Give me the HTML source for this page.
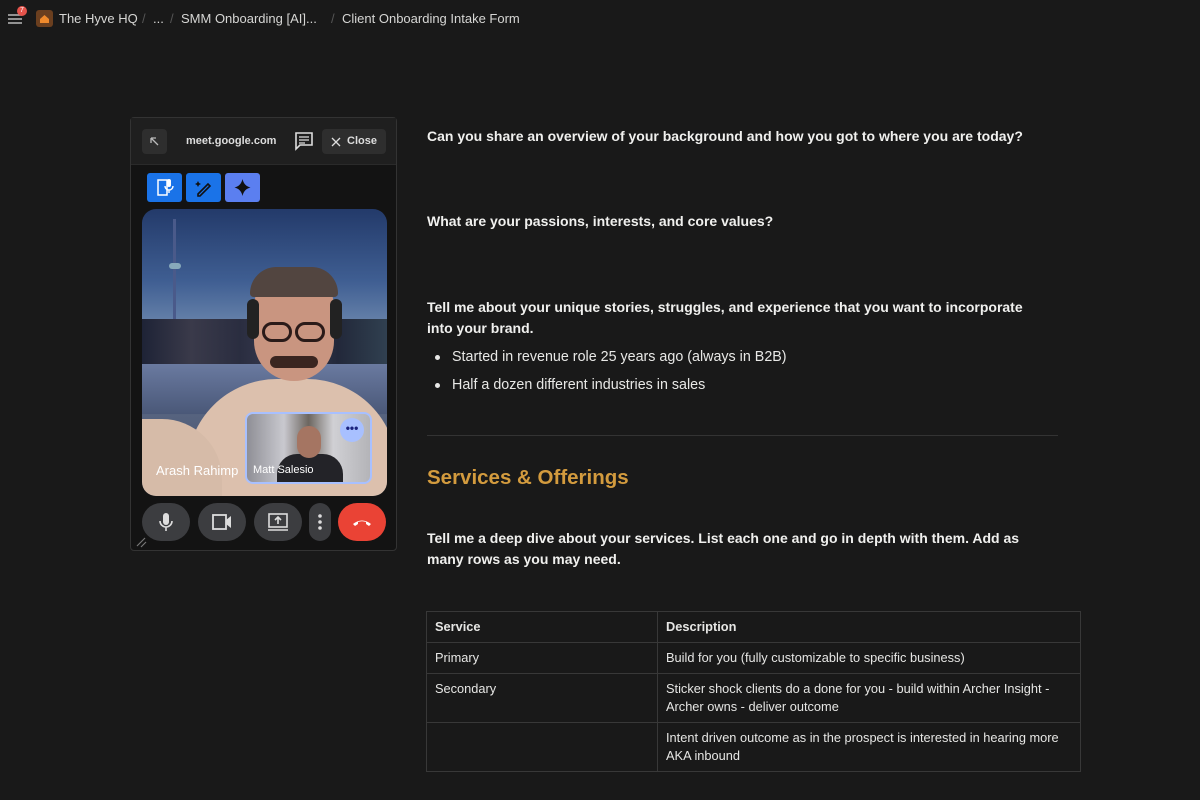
<!DOCTYPE html>
<html><head><meta charset="utf-8">
<style>
*{box-sizing:border-box;margin:0;padding:0}
body{width:1200px;height:800px;overflow:hidden;background:#191919;font-family:"Liberation Sans",sans-serif;color:#e8e8e6;position:relative}
.abs{position:absolute}
.crumb{top:11px;font-size:13px;color:#d6d6d4;white-space:nowrap}
.sep{color:#555}
.q{left:427px;font-size:14px;font-weight:bold;color:#f0f0ee;line-height:21px}
.li{left:452px;font-size:14.3px;color:#e8e8e6}
.li:before{content:"";position:absolute;left:-17px;top:6px;width:5px;height:5px;border-radius:50%;background:#e8e8e6}
table{position:absolute;left:426px;top:611px;width:655px;border-collapse:collapse;font-size:12.8px;color:#e6e6e4}
td{border:1px solid #383838;padding:6px 8px 6px 8px;vertical-align:top;line-height:18px}
.ctl{position:absolute;top:503px;height:38px;border-radius:19px;background:#3c3d40}
</style></head><body>
<svg class="abs" style="left:7px;top:12px" width="16" height="14"><path d="M1 3h14M1 7h14M1 11h14" stroke="#bbb" stroke-width="1.6"/></svg>
<div class="abs" style="left:17px;top:6px;width:10px;height:10px;border-radius:50%;background:#e5534b;font-size:7px;color:#fff;text-align:center;line-height:10px">7</div>
<div class="abs" style="left:36px;top:10px;width:17px;height:17px;border-radius:3px;background:#6b3f1f"><svg width="17" height="17"><path d="M4 9l4.5-4 4.5 4v4H4z" fill="#f08a2c"/></svg></div>
<div class="abs crumb" style="left:59px">The Hyve HQ</div>
<div class="abs crumb sep" style="left:142px">/</div>
<div class="abs crumb" style="left:153px">...</div>
<div class="abs crumb sep" style="left:170px">/</div>
<div class="abs crumb" style="left:181px">SMM Onboarding [AI]...</div>
<div class="abs crumb sep" style="left:331px">/</div>
<div class="abs crumb" style="left:342px">Client Onboarding Intake Form</div>

<div class="abs q" style="top:126px">Can you share an overview of your background and how you got to where you are today?</div>
<div class="abs q" style="top:211px">What are your passions, interests, and core values?</div>
<div class="abs q" style="top:297px;width:620px">Tell me about your unique stories, struggles, and experience that you want to incorporate into your brand.</div>
<div class="abs li" style="top:349px">Started in revenue role 25 years ago (always in B2B)</div>
<div class="abs li" style="top:377px">Half a dozen different industries in sales</div>
<div class="abs" style="left:427px;top:435px;width:631px;height:1px;background:#333"></div>
<div class="abs" style="left:427px;top:466px;font-size:20.5px;font-weight:bold;color:#d39b3e">Services &amp; Offerings</div>
<div class="abs q" style="top:528px;width:620px">Tell me a deep dive about your services. List each one and go in depth with them. Add as many rows as you may need.</div>
<table>
<tr><td style="width:231px;font-weight:bold">Service</td><td style="font-weight:bold">Description</td></tr>
<tr><td>Primary</td><td>Build for you (fully customizable to specific business)</td></tr>
<tr><td>Secondary</td><td>Sticker shock clients do a done for you - build within Archer Insight - Archer owns - deliver outcome</td></tr>
<tr><td></td><td>Intent driven outcome as in the prospect is interested in hearing more AKA inbound</td></tr>
</table>

<div class="abs" style="left:130px;top:117px;width:267px;height:434px;background:#131313;border:1px solid #333;border-radius:4px">
  <div class="abs" style="left:0;top:0;width:265px;height:47px;background:#1f1f1f;border-bottom:1px solid #2a2a2a"></div>
  <div class="abs" style="left:11px;top:11px;width:25px;height:25px;background:#2e2e2e;border-radius:4px"><svg width="25" height="25"><path d="M9 9l7 7M9 9h5M9 9v5" stroke="#bbb" stroke-width="1.3" fill="none"/></svg></div>
  <div class="abs" style="left:55px;top:17px;font-size:11px;font-weight:bold;color:#ddd">meet.google.com</div>
  <svg class="abs" style="left:163px;top:13px" width="20" height="20"><path d="M2 2h16v12H6l-4 4z" stroke="#ddd" stroke-width="1.6" fill="none"/><path d="M5 6h10M5 9h10M5 12h6" stroke="#ddd" stroke-width="1.3"/></svg>
  <div class="abs" style="left:191px;top:11px;width:64px;height:25px;background:#2e2e2e;border-radius:4px;font-size:11px;font-weight:bold;color:#ddd;line-height:25px;padding-left:25px">Close</div>
  <svg class="abs" style="left:200px;top:19px" width="10" height="10"><path d="M1 1l8 8M9 1l-8 8" stroke="#ddd" stroke-width="1.3"/></svg>
  <div class="abs" style="left:16px;top:55px;width:35px;height:29px;background:#1a73e8;border-radius:3px"><svg width="35" height="29"><path d="M11 7h9v15h-9z" stroke="#fff" stroke-width="1.5" fill="none"/><rect x="20" y="6" width="4" height="8" rx="2" fill="#fff"/><path d="M18 13a4 4 0 0 0 8 0M22 17v3" stroke="#fff" stroke-width="1.4" fill="none"/></svg></div>
  <div class="abs" style="left:55px;top:55px;width:35px;height:29px;background:#1a73e8;border-radius:3px"><svg width="35" height="29"><path d="M12 21l10-10 2 2-10 10h-2z" stroke="#111" stroke-width="1.6" fill="none"/><path d="M12 8l1 2 2 1-2 1-1 2-1-2-2-1 2-1z" fill="#111"/></svg></div>
  <div class="abs" style="left:94px;top:55px;width:35px;height:29px;background:#5b7ff0;border-radius:3px"><svg width="35" height="29"><path d="M17.5 6q1.5 7 8 8.5-6.5 1.5-8 8.5-1.5-7-8-8.5 6.5-1.5 8-8.5z" fill="#111"/></svg></div>
  <div class="abs" style="left:11px;top:91px;width:245px;height:287px;border-radius:14px;overflow:hidden;background:linear-gradient(180deg,#233a6a 0%,#3f5e92 25%,#6c87ad 42%,#4d5a78 52%,#3b4868 62%,#56637f 72%,#3e4a63 100%)">
    <div class="abs" style="left:31px;top:10px;width:3px;height:140px;background:#4a5a8a"></div>
    <div class="abs" style="left:27px;top:54px;width:12px;height:6px;border-radius:3px;background:#8ab"></div>
    <div class="abs" style="left:0;top:110px;width:245px;height:45px;background:linear-gradient(90deg,#1e2336 0%,#3a3a4a 20%,#2a2d40 40%,#3c3f55 60%,#22283a 80%,#304050 100%)"></div>
    <div class="abs" style="left:0;top:155px;width:245px;height:50px;background:linear-gradient(180deg,#6a7aa0,#4a5878)"></div>
    <div class="abs" style="left:45px;top:170px;width:210px;height:130px;border-radius:90px 90px 0 0;background:#dcc0ad"></div>
    <div class="abs" style="left:0;top:210px;width:80px;height:80px;border-radius:0 60px 0 0;background:#d6bba8"></div>
    <div class="abs" style="left:112px;top:62px;width:80px;height:110px;border-radius:40px 40px 45px 45px;background:#c99580"></div>
    <div class="abs" style="left:108px;top:58px;width:88px;height:30px;border-radius:44px 44px 6px 6px;background:#524540"></div>
    <div class="abs" style="left:105px;top:90px;width:12px;height:40px;border-radius:6px;background:#222"></div>
    <div class="abs" style="left:188px;top:90px;width:12px;height:40px;border-radius:6px;background:#222"></div>
    <div class="abs" style="left:120px;top:113px;width:30px;height:20px;border-radius:10px;border:3px solid #2a1a18"></div>
    <div class="abs" style="left:153px;top:113px;width:30px;height:20px;border-radius:10px;border:3px solid #2a1a18"></div>
    <div class="abs" style="left:128px;top:147px;width:48px;height:12px;border-radius:6px;background:#3a2520"></div>
    <div class="abs" style="left:14px;top:254px;font-size:13px;color:#fff">Arash Rahimp</div>
    <div class="abs" style="left:103px;top:203px;width:127px;height:72px;border-radius:8px;border:2px solid #a8c0ff;overflow:hidden;background:linear-gradient(90deg,#8f8f96 0%,#c9c9cf 30%,#6c6660 50%,#d0d0d4 70%,#b4b4b8 100%)">
      <div class="abs" style="left:30px;top:40px;width:66px;height:35px;border-radius:20px 20px 0 0;background:#232328"></div>
      <div class="abs" style="left:50px;top:12px;width:24px;height:32px;border-radius:12px;background:#a57562"></div>
      <div class="abs" style="left:93px;top:4px;width:24px;height:24px;border-radius:50%;background:#a8c0ff;font-size:12px;font-weight:bold;color:#1a237e;text-align:center;line-height:20px">•••</div>
      <div class="abs" style="left:6px;top:50px;font-size:11px;color:#fff">Matt Salesio</div>
    </div>
  </div>
  <div class="ctl" style="left:11px;top:385px;width:48px"><svg width="48" height="38"><rect x="21" y="10" width="6" height="12" rx="3" fill="#ddd"/><path d="M18 18a6 6 0 0 0 12 0M24 24v4" stroke="#ddd" stroke-width="1.6" fill="none"/></svg></div>
  <div class="ctl" style="left:67px;top:385px;width:48px"><svg width="48" height="38"><rect x="15" y="12" width="13" height="14" stroke="#ddd" stroke-width="1.8" fill="none"/><path d="M28 17l5-4v12l-5-4z" fill="#ddd"/></svg></div>
  <div class="ctl" style="left:123px;top:385px;width:48px"><svg width="48" height="38"><rect x="15" y="11" width="18" height="13" stroke="#ddd" stroke-width="1.6" fill="none"/><path d="M24 21v-7M21 17l3-3 3 3M14 27h20" stroke="#ddd" stroke-width="1.6" fill="none"/></svg></div>
  <div class="ctl" style="left:178px;top:385px;width:22px"><svg width="22" height="38"><circle cx="11" cy="13" r="1.8" fill="#ddd"/><circle cx="11" cy="19" r="1.8" fill="#ddd"/><circle cx="11" cy="25" r="1.8" fill="#ddd"/></svg></div>
  <div class="ctl" style="left:207px;top:385px;width:48px;background:#ea4335"><svg width="48" height="38"><path d="M15 21q9-7 18 0l-2 2-3-2v-2q-4-1.5-8 0v2l-3 2z" fill="#fff"/></svg></div>
  <svg class="abs" style="left:4px;top:418px" width="12" height="12"><path d="M2 10l8-8M6 11l5-5" stroke="#777" stroke-width="1.2"/></svg>
</div>
</body></html>
